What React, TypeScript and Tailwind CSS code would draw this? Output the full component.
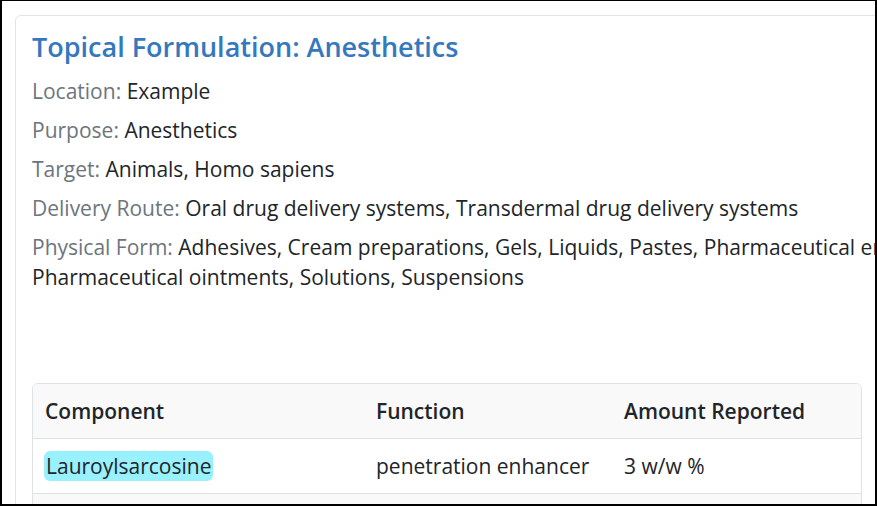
const rows = [
  { label: 'Location', value: 'Example' },
  { label: 'Purpose', value: 'Anesthetics' },
  { label: 'Target', value: 'Animals, Homo sapiens' },
  { label: 'Delivery Route', value: 'Oral drug delivery systems, Transdermal drug delivery systems' },
  {
    label: 'Physical Form',
    value:
      'Adhesives, Cream preparations, Gels, Liquids, Pastes, Pharmaceutical emulsions, Pharmaceutical ointments, Solutions, Suspensions',
  },
]

const App = () => {
  return (
    <div
      className="w-[877px] h-[506px] overflow-hidden bg-white border-t border-l-2 border-r-2 border-b-2 border-black pl-[13px] pt-[14px]"
      style={{ fontFamily: '"Open Sans", sans-serif' }}
    >
      <div className="w-[1040px] border border-[#e3e3e3] rounded-md px-4 pt-4">
        <h1 className="text-[27px] leading-[30px] font-semibold text-[#3478bd] mb-[14px]">
          Topical Formulation: Anesthetics
        </h1>
        {rows.map((r) => (
          <p key={r.label} className="text-[21px] leading-[30px] text-[#212529] mb-[9px]">
            <span className="text-[#6c757d]">{r.label}:</span> {r.value}
          </p>
        ))}

        <div className="mt-[91px] w-[830px] border border-[#dee2e6] rounded-md overflow-hidden text-[21px] leading-[30px] text-[#212529]">
          <div className="grid grid-cols-[331px_248px_1fr] bg-[#f9f9f9] border-b border-[#dee2e6] font-semibold">
            <div className="px-3 py-3">Component</div>
            <div className="px-3 py-3">Function</div>
            <div className="px-3 py-3">Amount Reported</div>
          </div>
          <div className="grid grid-cols-[331px_248px_1fr] bg-white border-b border-[#dee2e6]">
            <div className="px-[11px] py-3">
              <span className="bg-[#99f1fd] rounded-md px-[2px] py-0 inline-block">Lauroylsarcosine</span>
            </div>
            <div className="px-3 py-3">penetration enhancer</div>
            <div className="px-3 py-3">3 w/w %</div>
          </div>
          <div className="grid grid-cols-[331px_248px_1fr] bg-[#f9f9f9] h-[55px]">
            <div className="px-3 py-3" />
            <div className="px-3 py-3" />
            <div className="px-3 py-3" />
          </div>
        </div>
      </div>
    </div>
  )
}

export default App
